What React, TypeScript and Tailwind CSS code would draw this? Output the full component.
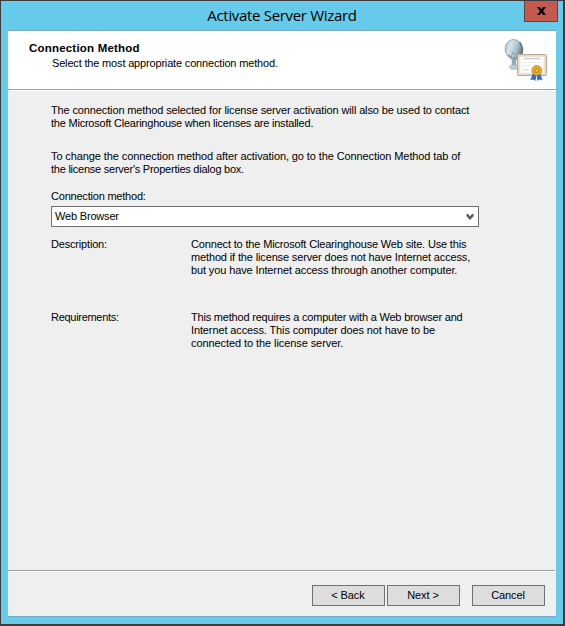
import React from 'react';

function Line({ children, className = '' }: { children: React.ReactNode; className?: string }) {
  return <span className={`block w-max whitespace-pre ${className}`}>{children}</span>;
}

function ServerIcon() {
  return (
    <svg width="46" height="46" viewBox="0 0 46 46" className="block">
      <defs>
        <linearGradient id="dish" x1="0" y1="0" x2="1" y2=".6">
          <stop offset="0" stopColor="#94a8b0" />
          <stop offset=".35" stopColor="#d5e6eb" />
          <stop offset=".7" stopColor="#a9c1ca" />
          <stop offset="1" stopColor="#5b747e" />
        </linearGradient>
        <radialGradient id="seal">
          <stop offset="0" stopColor="#f7dc7c" />
          <stop offset=".4" stopColor="#c98a12" />
          <stop offset=".7" stopColor="#eebb35" />
          <stop offset="1" stopColor="#c58a14" />
        </radialGradient>
      </defs>
      <rect width="46" height="46" fill="#fdfdfd" />
      <path d="M7.500 19h5l-.5 9h-4z" fill="#90a8b1" />
      <ellipse cx="10" cy="29" rx="4.500" ry="2.300" fill="#bdd0d6" stroke="#8ba2ab" strokeWidth=".6" />
      <ellipse cx="10" cy="11.500" rx="8.800" ry="10" transform="rotate(-12 10 11.500)" fill="url(#dish)" stroke="#8da3ab" strokeWidth=".8" />
      <path d="M15.500 4q5 7 1.500 14" fill="none" stroke="#5e7680" strokeWidth="1.300" />
      <path d="M9 14l-2 5M9 14l4 5" fill="none" stroke="#879ea7" strokeWidth=".8" />
      <path d="M4 17q5 5 13 2" fill="none" stroke="#8299a2" strokeWidth="1.500" />
      <rect x="13.500" y="16.500" width="29" height="21" rx="1" fill="#e4d9c9" stroke="#b9aa97" />
      <rect x="16" y="19" width="24" height="16" fill="#fff" stroke="#f5eddf" />
      <path d="M20 20.800h16" stroke="#b5b5d3" />
      <path d="M18 24.500h20M18 27.500h9" stroke="#d1d4e5" strokeWidth=".7" strokeDasharray="2 1" />
      <path d="M19 32h5" stroke="#bac1c5" strokeWidth=".8" />
      <path d="M29 35l-2.500 7 3-.5 2 1.500 1-7M36 35l2.500 7-3-.5-2 1.500-1-7" fill="#2f69d9" />
      <circle cx="32.800" cy="32.500" r="5" fill="url(#seal)" stroke="#c68b17" strokeWidth=".7" />
    </svg>
  );
}

function WizardButton({ children, primary = false, className = '' }: { children: React.ReactNode; primary?: boolean; className?: string }) {
  return (
    <button className={`flex h-[21px] w-[73px] items-center justify-center border bg-[#dddddd] pr-px tracking-[-0.1px] ${primary ? 'border-[#3c7fb1]' : 'border-[#707070]'} ${className}`}>
      {children}
    </button>
  );
}

export default function App() {
  return (
    <div className="flex h-[626px] w-[565px] flex-col border-t border-r-2 border-b-2 border-l border-[#3c3c3e] bg-[#66caea] pr-[7px] pb-[7px] pl-[7px] font-['Liberation_Sans',sans-serif] text-[11px] leading-[13px] text-black">
      <header className="relative flex h-[29px] shrink-0 justify-center">
        <h1 className="w-max pt-[3px] font-['Open_Sans',sans-serif] text-[15px] leading-[22px] font-normal tracking-[-0.32px] whitespace-pre">Activate Server Wizard</h1>
        <button aria-label="Close" className="absolute top-0 -right-[2px] flex h-[21px] w-[34px] items-center justify-center border border-t-0 border-[#673c3f] bg-[#c4594f]">
          <svg width="9" height="8" viewBox="0 0 9 8" className="block">
            <path d="M0 0h3l1.500 2.300L6 0h3L6 4l3 4H6L4.500 5.700 3 8H0l3-4z" fill="#000" />
          </svg>
        </button>
      </header>
      <main className="flex flex-1 flex-col border-t border-b border-[#76a9c5] bg-[#efefef]">
        <section className="flex h-[59px] shrink-0 justify-between border-b border-[#a0a0a0] bg-white pr-[6px]">
          <div className="pt-[11px] pl-[21px]">
            <h2 className="text-[11.5px] font-bold"><Line className="tracking-[0.2px]">Connection Method</Line></h2>
            <div className="pt-[2px] pl-[23px]"><Line className="tracking-[-0.17px]">Select the most appropriate connection method.</Line></div>
          </div>
          <div className="pt-[7px]"><ServerIcon /></div>
        </section>
        <section className="flex flex-1 flex-col border-t border-white pl-[43px]">
          <div className="pt-[13px]">
            <Line className="tracking-[-0.13px]">The connection method selected for license server activation will also be used to contact</Line>
            <Line className="tracking-[-0.22px]">the Microsoft Clearinghouse when licenses are installed.</Line>
          </div>
          <div className="pt-5">
            <Line className="tracking-[-0.1px]">To change the connection method after activation, go to the Connection Method tab of</Line>
            <Line className="tracking-[-0.24px]">the license server's Properties dialog box.</Line>
          </div>
          <div className="pt-[14px]"><Line className="tracking-[-0.21px]">Connection method:</Line></div>
          <div className="mt-[3px] flex h-[21px] w-[428px] items-center justify-between border border-[#707070] bg-white pr-1 pl-[3px]">
            <Line className="tracking-[-0.18px]">Web Browser</Line>
            <svg width="8" height="6" viewBox="0 0 8 6" className="block">
              <path d="M.5 0h1.500l2 2.200L6 0h1.500v2.300L4 6 .5 2.300z" fill="#5a5a5a" />
            </svg>
          </div>
          <div className="flex pt-[11px]">
            <div className="w-[140px]"><Line className="tracking-[-0.18px]">Description:</Line></div>
            <div>
              <Line className="tracking-[-0.165px]">Connect to the Microsoft Clearinghouse Web site. Use this</Line>
              <Line className="tracking-[-0.14px]">method if the license server does not have Internet access,</Line>
              <Line className="tracking-[-0.12px]">but you have Internet access through another computer.</Line>
            </div>
          </div>
          <div className="flex pt-[34px]">
            <div className="w-[140px]"><Line className="tracking-[-0.29px]">Requirements:</Line></div>
            <div>
              <Line className="tracking-[-0.2px]">This method requires a computer with a Web browser and</Line>
              <Line className="tracking-[-0.12px]">Internet access. This computer does not have to be</Line>
              <Line className="tracking-[-0.08px]">connected to the license server.</Line>
            </div>
          </div>
        </section>
        <footer className="flex h-[46px] shrink-0 flex-col">
          <div className="mr-px h-[2px] border-t border-b border-t-[#a0a0a0] border-b-white" />
          <div className="flex justify-end pt-[13px] pr-[11px]">
            <WizardButton>&lt; Back</WizardButton>
            <WizardButton primary className="ml-[2px]">Next &gt;</WizardButton>
            <WizardButton className="ml-3">Cancel</WizardButton>
          </div>
        </footer>
      </main>
    </div>
  );
}
